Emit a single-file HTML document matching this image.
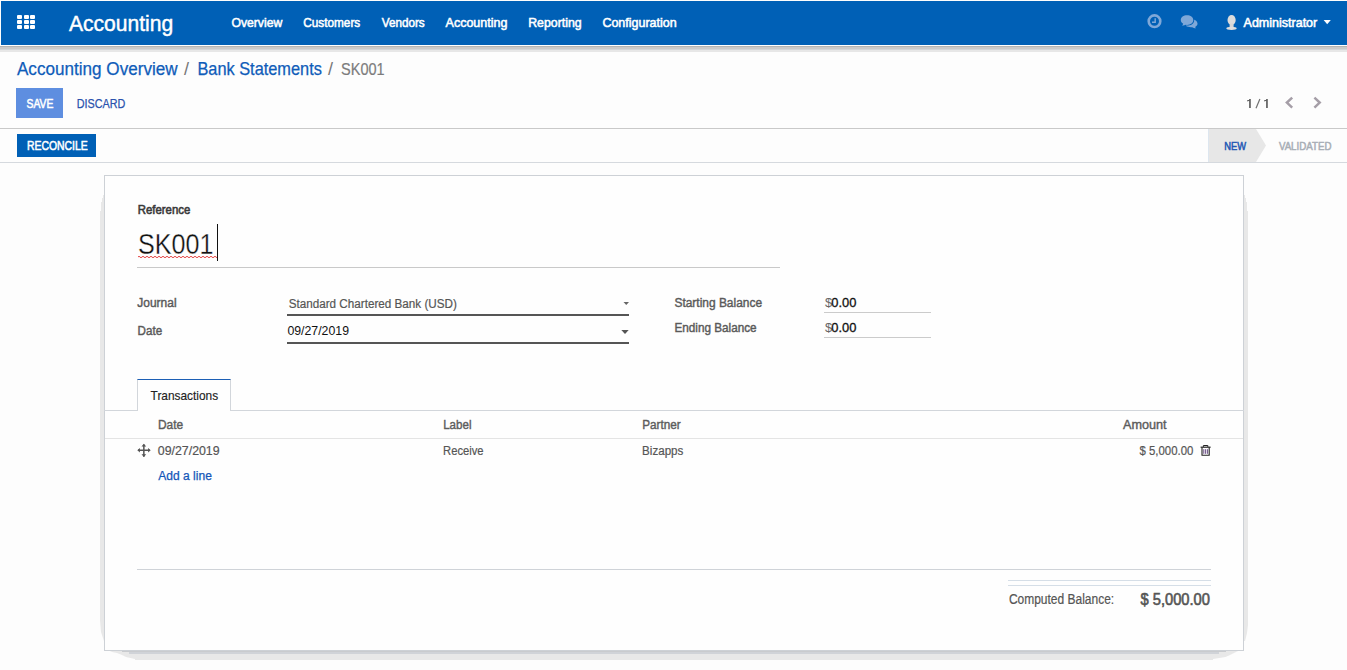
<!DOCTYPE html>
<html><head><meta charset="utf-8"><title>SK001 - Odoo</title>
<style>
*{margin:0;padding:0;box-sizing:border-box}
html,body{width:1347px;height:670px;overflow:hidden;background:#fdfdfd;font-family:"Liberation Sans",sans-serif}
.a{position:absolute}
#nav{left:1px;top:1px;width:1346px;height:44px;background:#0060b6}
.sq{position:absolute;width:5px;height:4px;background:#fff;border-radius:1px}
#txt{position:absolute;left:0;top:0;width:1347px;height:670px;pointer-events:none}
#txt text{font-family:"Liberation Sans",sans-serif}
</style></head><body>
<!-- navbar -->
<div class="a" id="nav"></div>
<div class="a" style="left:0;top:45px;width:1347px;height:1px;background:#fff"></div>
<div class="a" style="left:0;top:46px;width:1347px;height:1px;background:#b4b4b4"></div>
<div class="a" style="left:0;top:47px;width:1347px;height:2px;background:#cacaca"></div>
<div class="a" style="left:0;top:49px;width:1347px;height:1px;background:#d3d6d9"></div>
<div class="a" style="left:0;top:50px;width:1347px;height:2px;background:#e7e7e7"></div>
<div class="sq" style="left:17px;top:15px"></div><div class="sq" style="left:23.6px;top:15px"></div><div class="sq" style="left:30.2px;top:15px"></div>
<div class="sq" style="left:17px;top:20px"></div><div class="sq" style="left:23.6px;top:20px"></div><div class="sq" style="left:30.2px;top:20px"></div>
<div class="sq" style="left:17px;top:25px"></div><div class="sq" style="left:23.6px;top:25px"></div><div class="sq" style="left:30.2px;top:25px"></div>
<svg class="a" style="left:0;top:0" width="1347" height="46">
  <!-- clock -->
  <circle cx="1154.5" cy="21.2" r="5.8" fill="none" stroke="#7fa8d8" stroke-width="2.6"/>
  <path d="M1155.2 18.2 V22.2 H1152" fill="none" stroke="#7fa8d8" stroke-width="1.4"/>
  <!-- chat -->
  <path d="M1190.5 18.6 C1195 19.5 1197.8 21.5 1197.5 24 C1197.3 25.4 1196.2 26.4 1195 27 L1196 28.3 C1194.5 28.2 1193 27.7 1192 27.2 C1190 27.4 1187.5 27 1185.8 25.8 Z" fill="#7fa8d8"/>
  <path d="M1187 25.6 C1191 25.6 1194.2 23.8 1194.2 20.2 C1194.2 17 1191 15.1 1187.5 15.1 C1183.8 15.1 1180.8 17.2 1180.8 20.2 C1180.8 22 1181.8 23.4 1183.3 24.3 L1182.4 26 C1184 25.8 1185.3 25.5 1186.2 25.5 Z" fill="#0060b6"/>
  <path d="M1187 24.9 C1190.8 24.9 1193.3 22.9 1193.3 20 C1193.3 17.2 1190.5 15.2 1187 15.2 C1183.5 15.2 1180.8 17.2 1180.8 20 C1180.8 21.7 1181.8 23 1183.2 23.8 L1182.2 25.8 C1183.8 25.6 1185 25.1 1185.8 24.8 Z" fill="#7fa8d8"/>
  <!-- avatar -->
  <ellipse cx="1231.6" cy="20" rx="4.1" ry="5.1" fill="#dcdcdc"/>
  <rect x="1229.6" y="23.5" width="4" height="4" fill="#d6d6d6"/>
  <ellipse cx="1231.5" cy="28.3" rx="5.2" ry="1.6" fill="#dedede"/>
  <!-- caret -->
  <path d="M1323.6 20 H1330.8 L1327.2 24.2 Z" fill="#fff"/>
</svg>
<!-- control panel -->
<div class="a" style="left:16px;top:88px;width:47px;height:30px;background:#5e8ee0"></div>
<svg class="a" style="left:1280px;top:92px" width="50" height="22">
  <path d="M12.2 5.6 L6.9 10.6 L12.2 15.6" fill="none" stroke="#a59ea7" stroke-width="2.5"/>
  <path d="M34.4 5.6 L39.7 10.6 L34.4 15.6" fill="none" stroke="#a59ea7" stroke-width="2.5"/>
</svg>
<svg class="a" style="left:1240px;top:94px" width="30" height="18">
  <path d="M9.1 5 H10.8 V14 H9.1 Z M7 6.5 L9.4 5 H10 L10 6.5 L7.4 7.4 Z" fill="#606060"/>
  <path d="M16 14.2 L19.9 5" stroke="#707070" stroke-width="1.2"/>
  <path d="M26.1 5 H27.8 V14 H26.1 Z M24 6.5 L26.4 5 H27 L27 6.5 L24.4 7.4 Z" fill="#606060"/>
</svg>
<div class="a" style="left:0;top:128px;width:1347px;height:1px;background:#c9c9c9"></div>
<div class="a" style="left:0;top:162px;width:1347px;height:1px;background:#d5d9de"></div>
<div class="a" style="left:17px;top:134px;width:79px;height:23px;background:#0060b6"></div>
<svg class="a" style="left:1200px;top:129px" width="147" height="33">
  <path d="M8 0 H56 L66 16.5 L56 33 H8 Z" fill="#e7e7e7"/>
  <rect x="8" y="0" width="1" height="33" fill="#dde6ef"/>
</svg>
<!-- sheet shadows -->
<svg class="a" style="left:0;top:0" width="1347" height="670">
  <path d="M103 195 H104 V641 L103 638 L102 635 L101 632 L100 620 V211 H101 V202 H102 V198 H103 Z" fill="#e8e8e8"/>
  <path d="M1244 195 H1245 V198 H1246 V202 H1247 V211 H1248 V625 L1247 633 L1246 637 L1245 641 H1244 Z" fill="#e8e8e8"/>
  <path d="M104 650 L110 651 L112 652 L117 653 L122 655 L126 657 L135 659 L135 660 H1213 V659 L1225.5 657 L1230 655 L1234 653 L1238 651 L1244 650 Z" fill="#e8e8e8"/>
  <rect x="122" y="651" width="1104" height="1" fill="#c9cbce"/>
  <rect x="129" y="652" width="1090" height="2" fill="#d0d3d8"/>
</svg>
<!-- sheet -->
<div class="a" style="left:104px;top:175px;width:1140px;height:476px;background:#fefefe;border:1px solid #cdd1d6"></div>
<!-- reference -->
<div class="a" style="left:137px;top:267px;width:643px;height:1px;background:#c9c9c9"></div>
<svg class="a" style="left:136px;top:254px" width="84" height="8">
  <path d="M2 3 q1 -1.5 2 0 t2 0 t2 0 t2 0 t2 0 t2 0 t2 0 t2 0 t2 0 t2 0 t2 0 t2 0 t2 0 t2 0 t2 0 t2 0 t2 0 t2 0 t2 0 t2 0 t2 0 t2 0 t2 0 t2 0 t2 0 t2 0 t2 0 t2 0 t2 0 t2 0 t2 0 t2 0 t2 0 t2 0 t2 0 t2 0 t2 0 t2 0 t2 0 t2 0" fill="none" stroke="#e03030" stroke-width="0.9"/>
</svg>
<div class="a" style="left:217px;top:224px;width:1px;height:37px;background:#111"></div>
<!-- fields -->
<div class="a" style="left:287px;top:314px;width:342px;height:2px;background:#555"></div>
<div class="a" style="left:287px;top:342px;width:342px;height:2px;background:#555"></div>
<svg class="a" style="left:618px;top:298px" width="14" height="40">
  <path d="M5.5 4 H11 L8.25 7 Z" fill="#666"/>
  <path d="M3.3 32 H10.7 L7 36 Z" fill="#555"/>
</svg>
<div class="a" style="left:824px;top:312px;width:107px;height:1px;background:#cbcbcb"></div>
<div class="a" style="left:824px;top:337px;width:107px;height:1px;background:#cbcbcb"></div>
<!-- tabs -->
<div class="a" style="left:104px;top:410px;width:1140px;height:1px;background:#d2d6db"></div>
<div class="a" style="left:137px;top:379px;width:94px;height:32px;background:#fefefe;border:1px solid #d2d6db;border-top:1px solid #1c5fb5;border-bottom:none"></div>
<div class="a" style="left:105px;top:438px;width:1138px;height:1px;background:#e4e4e4"></div>
<svg class="a" style="left:134px;top:441px" width="20" height="20">
  <path d="M9.85 3.5 V15.7 M4 9.25 H15.7" stroke="#555" stroke-width="1.5"/>
  <path d="M9.85 2.8 L7.5 5.4 H12.2 Z M9.85 15.9 L7.5 13.3 H12.2 Z M3.3 9.25 L5.9 6.9 V11.6 Z M16.7 9.25 L14.1 6.9 V11.6 Z" fill="#555"/>
</svg>
<svg class="a" style="left:1196px;top:441px" width="20" height="20">
  <path d="M4.6 6.2 H14.6" stroke="#222" stroke-width="1.2"/>
  <path d="M7.4 5.9 V4.5 H11.8 V5.9" fill="none" stroke="#222" stroke-width="1"/>
  <path d="M6 6.6 V14.2 H13.2 V6.6" fill="none" stroke="#222" stroke-width="1.1"/>
  <path d="M7.8 8.2 V12.8 M9.6 8.2 V12.8 M11.4 8.2 V12.8" stroke="#5a3a78" stroke-width="0.9"/>
</svg>
<!-- totals -->
<div class="a" style="left:137px;top:569px;width:1074px;height:1px;background:#cfd3d8"></div>
<div class="a" style="left:1008px;top:580px;width:203px;height:1px;background:#d5dee7"></div>
<div class="a" style="left:1008px;top:585px;width:203px;height:1px;background:#d5dee7"></div>
<svg id="txt" width="1347" height="670">
<text x="68.92" y="31.00" font-size="22.09" font-weight="400" fill="#fff" stroke="#fff" stroke-width="0.45" textLength="104.21" lengthAdjust="spacingAndGlyphs">Accounting</text>
<text x="231.38" y="26.70" font-size="13.08" font-weight="400" fill="#fff" stroke="#fff" stroke-width="0.55" textLength="50.92" lengthAdjust="spacingAndGlyphs">Overview</text>
<text x="303.27" y="26.70" font-size="13.08" font-weight="400" fill="#fff" stroke="#fff" stroke-width="0.55" textLength="56.95" lengthAdjust="spacingAndGlyphs">Customers</text>
<text x="381.77" y="26.70" font-size="13.08" font-weight="400" fill="#fff" stroke="#fff" stroke-width="0.55" textLength="42.95" lengthAdjust="spacingAndGlyphs">Vendors</text>
<text x="445.57" y="26.70" font-size="13.08" font-weight="400" fill="#fff" stroke="#fff" stroke-width="0.55" textLength="61.82" lengthAdjust="spacingAndGlyphs">Accounting</text>
<text x="528.17" y="26.70" font-size="13.08" font-weight="400" fill="#fff" stroke="#fff" stroke-width="0.55" textLength="53.46" lengthAdjust="spacingAndGlyphs">Reporting</text>
<text x="602.38" y="26.70" font-size="13.08" font-weight="400" fill="#fff" stroke="#fff" stroke-width="0.55" textLength="74.33" lengthAdjust="spacingAndGlyphs">Configuration</text>
<text x="1243.58" y="26.50" font-size="12.35" font-weight="400" fill="#fff" stroke="#fff" stroke-width="0.55" textLength="73.66" lengthAdjust="spacingAndGlyphs">Administrator</text>
<text x="16.93" y="74.70" font-size="18.02" font-weight="400" fill="#0f5cb9" stroke="#0f5cb9" stroke-width="0.25" textLength="160.72" lengthAdjust="spacingAndGlyphs">Accounting Overview</text>
<text x="197.43" y="74.60" font-size="17.59" font-weight="400" fill="#0f5cb9" stroke="#0f5cb9" stroke-width="0.25" textLength="124.46" lengthAdjust="spacingAndGlyphs">Bank Statements</text>
<text x="341.10" y="74.60" font-size="17.30" font-weight="400" fill="#7c7c7c" stroke="#7c7c7c" stroke-width="0.20" textLength="43.56" lengthAdjust="spacingAndGlyphs">SK001</text>
<text x="26.47" y="107.90" font-size="12.35" font-weight="400" fill="#fff" stroke="#fff" stroke-width="0.55" textLength="26.94" lengthAdjust="spacingAndGlyphs">SAVE</text>
<text x="76.72" y="107.90" font-size="12.35" font-weight="400" fill="#2a52ad" stroke="#2a52ad" stroke-width="0.25" textLength="48.56" lengthAdjust="spacingAndGlyphs">DISCARD</text>
<text x="26.97" y="149.70" font-size="12.35" font-weight="400" fill="#fff" stroke="#fff" stroke-width="0.55" textLength="60.75" lengthAdjust="spacingAndGlyphs">RECONCILE</text>
<text x="1224.28" y="149.90" font-size="11.48" font-weight="400" fill="#2358b4" stroke="#2358b4" stroke-width="0.55" textLength="21.83" lengthAdjust="spacingAndGlyphs">NEW</text>
<text x="1278.88" y="149.90" font-size="11.48" font-weight="400" fill="#a8aeb6" stroke="#a8aeb6" stroke-width="0.55" textLength="52.54" lengthAdjust="spacingAndGlyphs">VALIDATED</text>
<text x="137.70" y="213.70" font-size="12.65" font-weight="400" fill="#3a3a3a" stroke="#3a3a3a" stroke-width="0.60" textLength="52.59" lengthAdjust="spacingAndGlyphs">Reference</text>
<text x="138.00" y="253.90" font-size="30.09" font-weight="400" fill="#111" stroke="#fefefe" stroke-width="0.35" textLength="75.44" lengthAdjust="spacingAndGlyphs">SK001</text>
<text x="137.32" y="307.00" font-size="13.08" font-weight="400" fill="#5a5a5a" stroke="#5a5a5a" stroke-width="0.45" textLength="39.25" lengthAdjust="spacingAndGlyphs">Journal</text>
<text x="137.62" y="335.20" font-size="12.50" font-weight="400" fill="#5a5a5a" stroke="#5a5a5a" stroke-width="0.45" textLength="24.58" lengthAdjust="spacingAndGlyphs">Date</text>
<text x="288.70" y="307.80" font-size="12.50" font-weight="400" fill="#555" stroke="#555" stroke-width="0.20" textLength="168.21" lengthAdjust="spacingAndGlyphs">Standard Chartered Bank (USD)</text>
<text x="287.40" y="335.30" font-size="12.60" font-weight="400" fill="#111" textLength="61.60" lengthAdjust="spacingAndGlyphs">09/27/2019</text>
<text x="674.43" y="307.30" font-size="13.52" font-weight="400" fill="#5a5a5a" stroke="#5a5a5a" stroke-width="0.45" textLength="87.63" lengthAdjust="spacingAndGlyphs">Starting Balance</text>
<text x="674.43" y="332.20" font-size="12.94" font-weight="400" fill="#5a5a5a" stroke="#5a5a5a" stroke-width="0.45" textLength="82.16" lengthAdjust="spacingAndGlyphs">Ending Balance</text>
<text x="150.57" y="399.60" font-size="12.35" font-weight="400" fill="#222" stroke="#222" stroke-width="0.15" textLength="67.62" lengthAdjust="spacingAndGlyphs">Transactions</text>
<text x="157.90" y="429.10" font-size="12.50" font-weight="400" fill="#5c5c5c" stroke="#5c5c5c" stroke-width="0.40" textLength="25.23" lengthAdjust="spacingAndGlyphs">Date</text>
<text x="443.20" y="429.10" font-size="12.50" font-weight="400" fill="#5c5c5c" stroke="#5c5c5c" stroke-width="0.40" textLength="28.32" lengthAdjust="spacingAndGlyphs">Label</text>
<text x="642.20" y="429.10" font-size="12.50" font-weight="400" fill="#5c5c5c" stroke="#5c5c5c" stroke-width="0.40" textLength="38.49" lengthAdjust="spacingAndGlyphs">Partner</text>
<text x="1123.00" y="429.20" font-size="12.50" font-weight="400" fill="#5c5c5c" stroke="#5c5c5c" stroke-width="0.40" textLength="43.62" lengthAdjust="spacingAndGlyphs">Amount</text>
<text x="157.80" y="454.80" font-size="12.60" font-weight="400" fill="#555" stroke="#555" stroke-width="0.20" textLength="61.80" lengthAdjust="spacingAndGlyphs">09/27/2019</text>
<text x="443.10" y="454.80" font-size="12.50" font-weight="400" fill="#555" stroke="#555" stroke-width="0.20" textLength="40.48" lengthAdjust="spacingAndGlyphs">Receive</text>
<text x="642.10" y="454.80" font-size="12.50" font-weight="400" fill="#555" stroke="#555" stroke-width="0.20" textLength="41.27" lengthAdjust="spacingAndGlyphs">Bizapps</text>
<text x="158.32" y="480.30" font-size="12.21" font-weight="400" fill="#1456b8" stroke="#1456b8" stroke-width="0.25" textLength="53.52" lengthAdjust="spacingAndGlyphs">Add a line</text>
<text x="1008.90" y="604.00" font-size="14.39" font-weight="400" fill="#555" stroke="#555" stroke-width="0.20" textLength="105.28" lengthAdjust="spacingAndGlyphs">Computed Balance:</text>
<text x="1140.50" y="604.60" font-size="16.00" font-weight="400" fill="#555" stroke="#555" stroke-width="0.60" textLength="69.42" lengthAdjust="spacingAndGlyphs">$ 5,000.00</text>
<text x="824.9" y="306.9" font-size="12.9" fill="#666">$</text>
<text x="831.3" y="306.9" font-size="12.9" fill="#111" stroke="#111" stroke-width="0.3">0.00</text>
<text x="824.9" y="331.9" font-size="12.9" fill="#666">$</text>
<text x="831.3" y="331.9" font-size="12.9" fill="#111" stroke="#111" stroke-width="0.3">0.00</text>
<text x="1139.5" y="454.6" font-size="12.6" fill="#555" stroke="#555" stroke-width="0.2" textLength="53.8" lengthAdjust="spacingAndGlyphs">$ 5,000.00</text>
<text x="184" y="74.6" font-size="18" fill="#777">/</text>
<text x="328" y="74.6" font-size="18" fill="#777">/</text>
</svg>
</body></html>
